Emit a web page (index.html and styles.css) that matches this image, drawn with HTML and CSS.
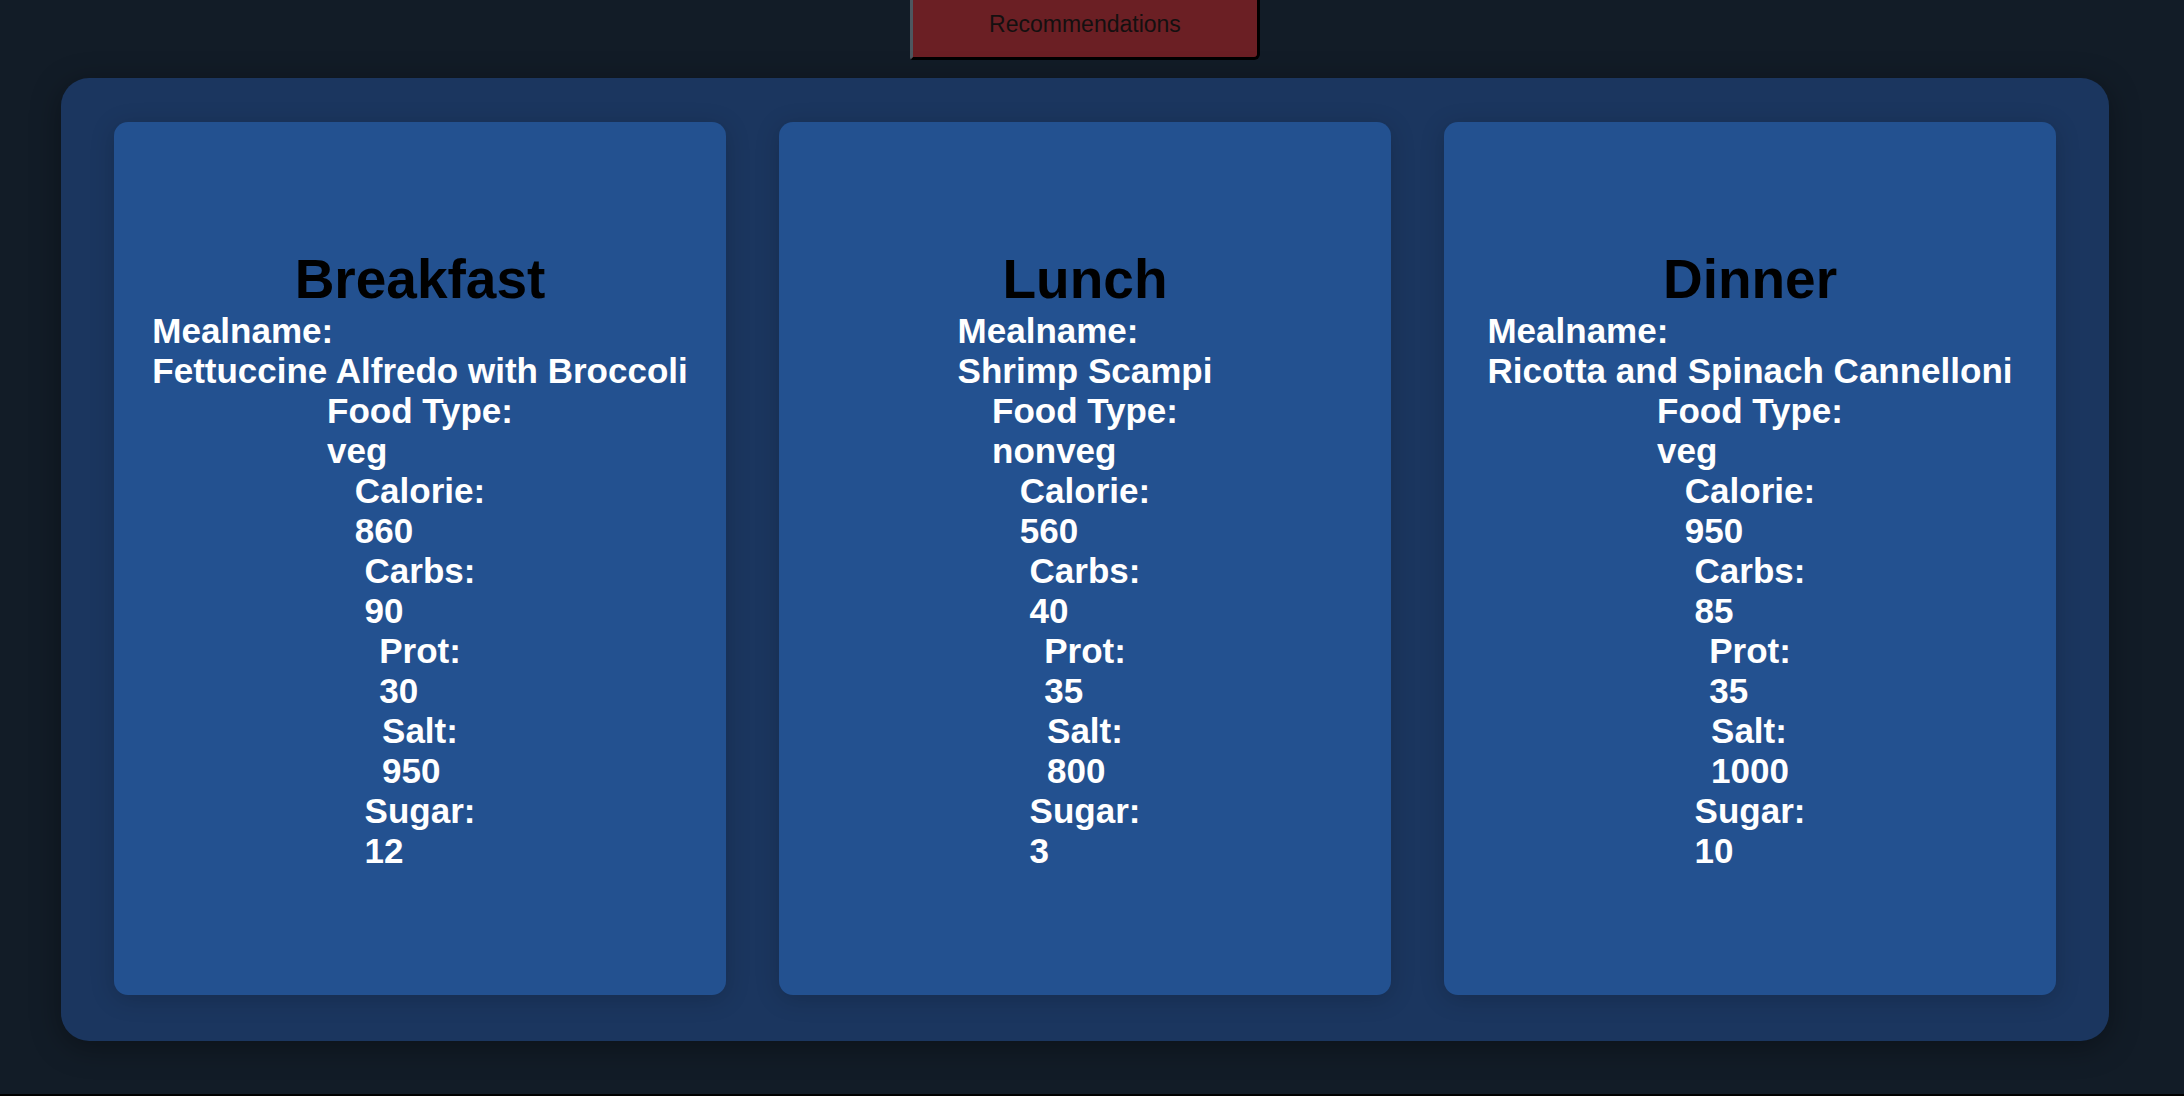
FILE: index.html
```html
<!DOCTYPE html>
<html lang="en">
<head>
<meta charset="utf-8">
<title>Recommendations</title>
<link rel="stylesheet" href="styles.css">
</head>
<body>
<div class="page">
  <button class="rec-btn" type="button">Recommendations</button>
  <section class="plan">
    <article class="card">
      <h2 class="card-title">Breakfast</h2>
      <div class="field"><p>Mealname:</p><p>Fettuccine Alfredo with Broccoli</p></div>
      <div class="field"><p>Food Type:</p><p>veg</p></div>
      <div class="field"><p>Calorie:</p><p>860</p></div>
      <div class="field"><p>Carbs:</p><p>90</p></div>
      <div class="field"><p>Prot:</p><p>30</p></div>
      <div class="field"><p>Salt:</p><p>950</p></div>
      <div class="field"><p>Sugar:</p><p>12</p></div>
    </article>
    <article class="card">
      <h2 class="card-title">Lunch</h2>
      <div class="field"><p>Mealname:</p><p>Shrimp Scampi</p></div>
      <div class="field"><p>Food Type:</p><p>nonveg</p></div>
      <div class="field"><p>Calorie:</p><p>560</p></div>
      <div class="field"><p>Carbs:</p><p>40</p></div>
      <div class="field"><p>Prot:</p><p>35</p></div>
      <div class="field"><p>Salt:</p><p>800</p></div>
      <div class="field"><p>Sugar:</p><p>3</p></div>
    </article>
    <article class="card">
      <h2 class="card-title">Dinner</h2>
      <div class="field"><p>Mealname:</p><p>Ricotta and Spinach Cannelloni</p></div>
      <div class="field"><p>Food Type:</p><p>veg</p></div>
      <div class="field"><p>Calorie:</p><p>950</p></div>
      <div class="field"><p>Carbs:</p><p>85</p></div>
      <div class="field"><p>Prot:</p><p>35</p></div>
      <div class="field"><p>Salt:</p><p>1000</p></div>
      <div class="field"><p>Sugar:</p><p>10</p></div>
    </article>
  </section>
</div>
</body>
</html>
```

FILE: styles.css
```css
html {
  background: #000;
}

body {
  margin: 0;
  font-family: "Liberation Sans", Arial, sans-serif;
}

.page {
  height: 1094px;
  padding-right: 14px;
  background: #121c27;
  display: flex;
  flex-direction: column;
  align-items: center;
  overflow: hidden;
}

.rec-btn {
  margin-top: -12px;
  width: 350px;
  height: 72px;
  padding: 4px 0 0;
  background: #6b1f24;
  color: #141010;
  font-family: "Liberation Sans", Arial, sans-serif;
  font-size: 23px;
  border-style: solid;
  border-width: 0 3px 3px 3px;
  border-color: transparent #000 #000 #4d575f;
  border-radius: 0 0 6px 3px;
}

.plan {
  margin-top: 18px;
  width: 2048px;
  height: 963px;
  box-sizing: border-box;
  padding: 44px 53px;
  display: flex;
  gap: 53px;
  background: #1b365f;
  border-radius: 28px;
  box-shadow: 0 6px 30px rgba(0, 0, 0, 0.35);
}

.card {
  width: 612px;
  height: 873px;
  flex: none;
  border-radius: 14px;
  background: #235190;
  display: flex;
  flex-direction: column;
  justify-content: center;
  box-shadow: 0 4px 24px rgba(0, 0, 0, 0.18);
}

.card-title {
  margin: 0;
  font-size: 55px;
  font-weight: bold;
  text-align: center;
  color: #000;
}

.field {
  align-self: center;
  color: #fff;
  font-size: 35px;
  font-weight: bold;
}

.field p {
  margin: 0;
}
```
